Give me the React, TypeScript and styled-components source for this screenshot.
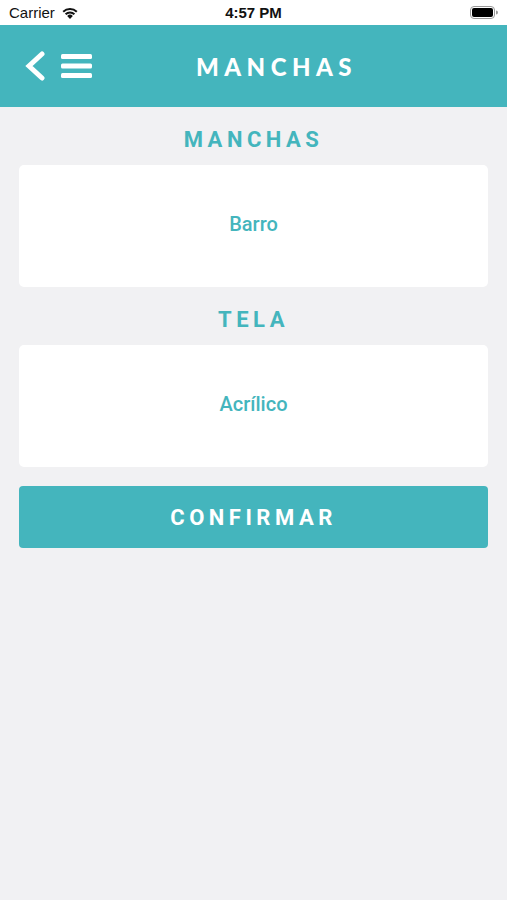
import React from "react"
import styled, { createGlobalStyle } from "styled-components"

const teal = "#44b5bd"

const GlobalStyle = createGlobalStyle`
  html, body {
    margin: 0;
    padding: 0;
    background: #f1f1f3;
  }
  * {
    box-sizing: border-box;
  }
`

const Screen = styled.div`
  width: 507px;
  min-height: 900px;
  background: #f1f1f3;
  font-family: Roboto, "Liberation Sans", sans-serif;
`

const StatusBar = styled.div`
  height: 25px;
  background: #ffffff;
  display: grid;
  grid-template-columns: 1fr auto 1fr;
  align-items: center;
  padding: 0 9px;
  font-family: "Liberation Sans", Arial, sans-serif;
  font-size: 15px;
  color: #111;
`

const Carrier = styled.div`
  display: flex;
  align-items: center;
  gap: 6px;
`

const Clock = styled.div`
  font-weight: bold;
`

const BatteryWrap = styled.div`
  display: flex;
  justify-content: flex-end;
`

const NavBar = styled.header`
  height: 82px;
  background: ${teal};
  display: flex;
  align-items: center;
  padding: 0 50px 0 24px;
`

const NavButtons = styled.div`
  display: flex;
  align-items: center;
  gap: 15px;
`

const NavTitle = styled.h1`
  flex: 1;
  margin: 0;
  text-align: center;
  color: #ffffff;
  font-family: Lato, "Open Sans", sans-serif;
  font-weight: 900;
  font-size: 24px;
  letter-spacing: 5.5px;
  padding-left: 4px;
`

const Content = styled.main`
  display: flex;
  flex-direction: column;
  padding: 21px 19px 0;
`

const SectionTitle = styled.h2`
  margin: 0 0 13px;
  text-align: center;
  color: ${teal};
  font-size: 22px;
  font-weight: 700;
  letter-spacing: 4.5px;
  line-height: 24px;
`

const OptionCard = styled.div`
  height: 122px;
  background: #ffffff;
  border-radius: 5px;
  display: flex;
  align-items: center;
  justify-content: center;
  color: ${teal};
  font-size: 20px;
  font-weight: 500;
  padding-bottom: 4px;
  margin-bottom: 21px;
`

const ConfirmButton = styled.button`
  height: 62px;
  margin-top: -2px;
  border: none;
  border-radius: 4px;
  background: ${teal};
  color: #ffffff;
  font-family: Roboto, "Liberation Sans", sans-serif;
  font-weight: 700;
  font-size: 22px;
  letter-spacing: 4.5px;
  padding: 0;
`

function Wifi() {
  return (
    <svg width="18" height="13" viewBox="0 0 18 13">
      <path d="M9 13 L6.2 9.9 A4 4 0 0 1 11.8 9.9 Z" fill="#111" />
      <path d="M3.9 7.6 A7.3 7.3 0 0 1 14.1 7.6 L12.7 9.1 A5.3 5.3 0 0 0 5.3 9.1 Z" fill="#111" />
      <path d="M1.5 5 A10.8 10.8 0 0 1 16.5 5 L15.1 6.5 A8.8 8.8 0 0 0 2.9 6.5 Z" fill="#111" />
    </svg>
  )
}

function Battery() {
  return (
    <svg width="28" height="13" viewBox="0 0 28 13">
      <rect x="0.5" y="0.5" width="24" height="12" rx="3.5" fill="none" stroke="#999" />
      <rect x="2" y="2" width="21" height="9" rx="2" fill="#000" />
      <path d="M26 4.5 a1.5 1.5 0 0 1 0 4 Z" fill="#999" />
    </svg>
  )
}

function BackIcon() {
  return (
    <svg width="22" height="30" viewBox="0 0 22 30">
      <path d="M18 3 L5 15 L18 27" fill="none" stroke="#fff" strokeWidth="5" strokeLinecap="round" strokeLinejoin="miter" />
    </svg>
  )
}

function MenuIcon() {
  return (
    <svg width="31" height="26" viewBox="0 0 31 26">
      <rect x="0" y="1" width="31" height="5" rx="1.5" fill="#fff" />
      <rect x="0" y="10.5" width="31" height="5" rx="1.5" fill="#fff" />
      <rect x="0" y="20" width="31" height="5" rx="1.5" fill="#fff" />
    </svg>
  )
}

export default function App() {
  return (
    <Screen>
      <GlobalStyle />
      <StatusBar>
        <Carrier>
          Carrier <Wifi />
        </Carrier>
        <Clock>4:57 PM</Clock>
        <BatteryWrap>
          <Battery />
        </BatteryWrap>
      </StatusBar>
      <NavBar>
        <NavButtons>
          <BackIcon />
          <MenuIcon />
        </NavButtons>
        <NavTitle>MANCHAS</NavTitle>
      </NavBar>
      <Content>
        <SectionTitle>MANCHAS</SectionTitle>
        <OptionCard>Barro</OptionCard>
        <SectionTitle>TELA</SectionTitle>
        <OptionCard>Acrílico</OptionCard>
        <ConfirmButton>CONFIRMAR</ConfirmButton>
      </Content>
    </Screen>
  )
}
